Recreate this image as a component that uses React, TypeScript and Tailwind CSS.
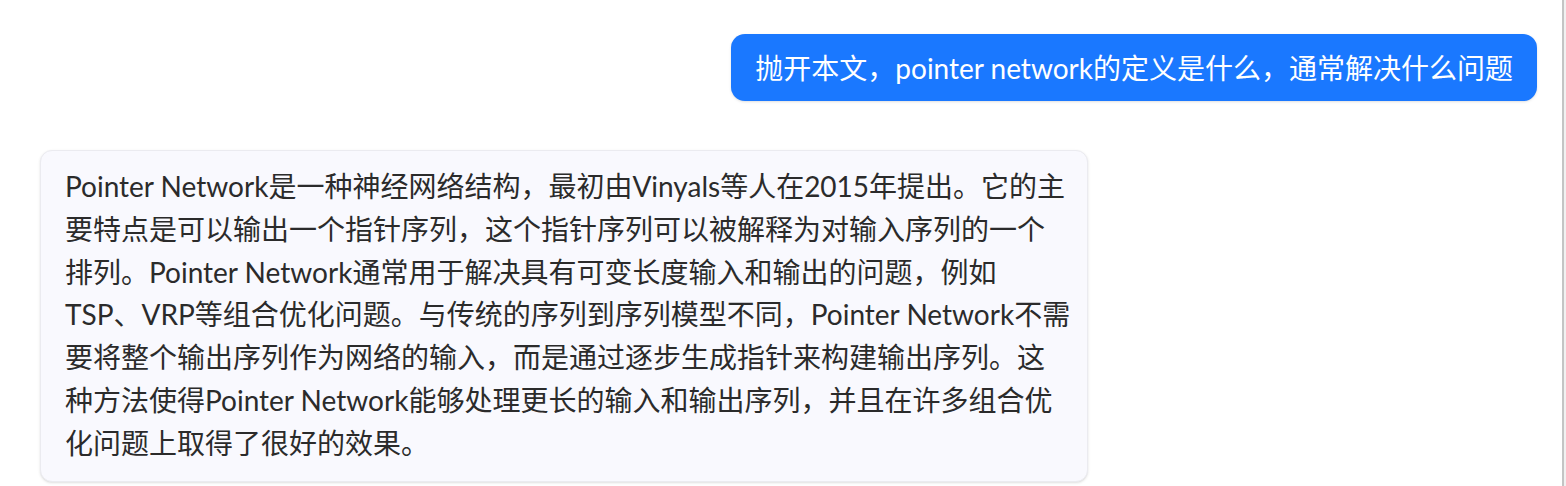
import React from "react"

const answer = [
  "Pointer Network是一种神经网络结构，最初由Vinyals等人在2015年提出。它的主",
  "要特点是可以输出一个指针序列，这个指针序列可以被解释为对输入序列的一个",
  "排列。Pointer Network通常用于解决具有可变长度输入和输出的问题，例如",
  "TSP、VRP等组合优化问题。与传统的序列到序列模型不同，Pointer Network不需",
  "要将整个输出序列作为网络的输入，而是通过逐步生成指针来构建输出序列。这",
  "种方法使得Pointer Network能够处理更长的输入和输出序列，并且在许多组合优",
  "化问题上取得了很好的效果。",
]

export default function App() {
  return (
    <div
      className="flex h-[486px] w-full overflow-hidden bg-white"
      style={{ fontFamily: 'Lato, "Noto Sans CJK SC", sans-serif' }}
    >
      <div className="flex flex-1 flex-col pl-[40px] pr-[25px] pt-[34px]">
        <div className="flex justify-end">
          <div className="whitespace-nowrap rounded-[14px] bg-[#1a78ff] px-6 py-[12.5px] text-[28px] leading-[42px] text-white shadow-sm">
            抛开本文，pointer network的定义是什么，通常解决什么问题
          </div>
        </div>

        <div className="mt-[49px] w-[1048px] rounded-[12px] border border-[#ebebf0] bg-[#f9f9fe] px-6 pb-[16px] pt-[14px] text-[28px] leading-[42.8px] text-[#2b2b2b] shadow-sm">
          {answer.map((line, i) => (
            <div key={i} className="whitespace-nowrap">
              {line}
            </div>
          ))}
        </div>
      </div>

      <div className="w-[4px] border-l-2 border-[#c4c4c4] bg-[#f1f1f1]" />
    </div>
  )
}
